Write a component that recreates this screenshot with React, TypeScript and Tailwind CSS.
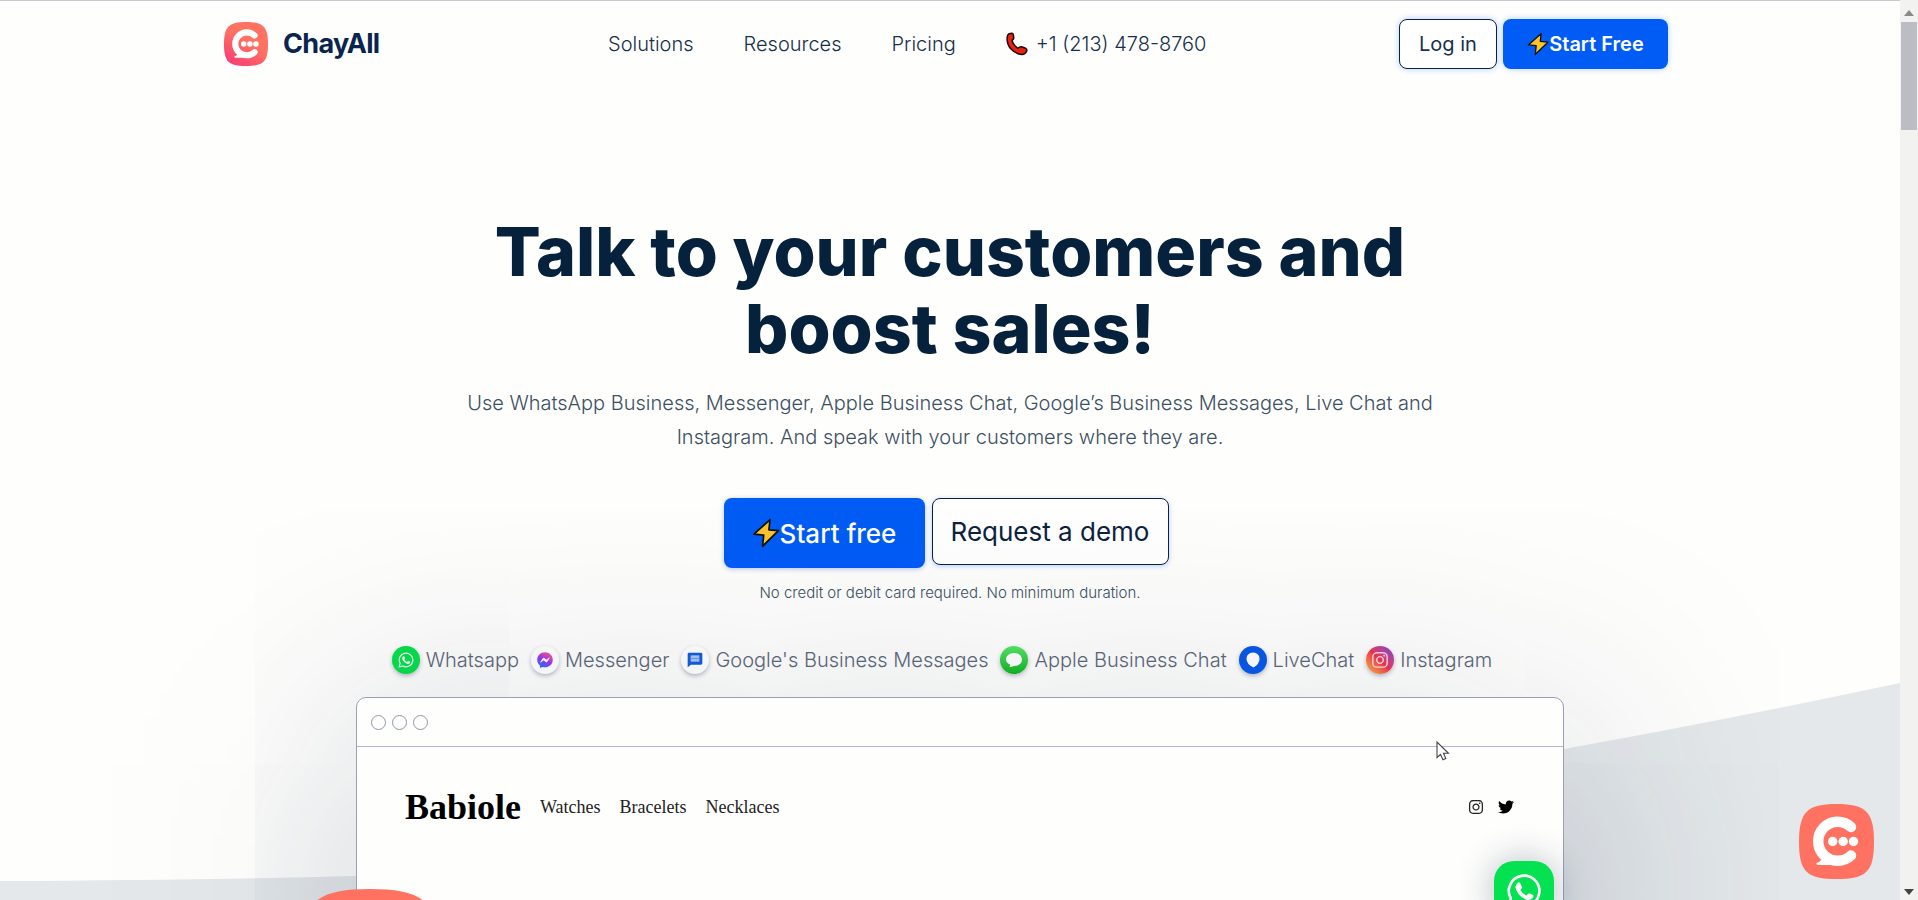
import React from 'react';
import { FaFacebookMessenger, FaInstagram, FaTwitter } from 'react-icons/fa';

const SQUIRCLE = 'M0 38C0 8 8 0 37.5 0S75 8 75 38 67 75 37.5 75 0 68 0 38Z';

const ChayIcon: React.FC<{ className: string; id: string; gradient?: boolean }> = ({ className, id, gradient }) => (
    <svg viewBox="0 0 75 75" className={className} aria-hidden="true">
        <defs>
            <linearGradient id={id} x1="0.7" y1="0.2" x2="0.2" y2="1">
                <stop offset="0.3" stopColor="#ff7262" />
                <stop offset="1" stopColor={gradient ? '#fb3c73' : '#ff7262'} />
            </linearGradient>
        </defs>
        <path d={SQUIRCLE} fill={`url(#${id})`} />
        <path d="M52 23A19.5 19.5 0 1 0 52 51.500" fill="none" stroke="#fff" strokeWidth="10.500" strokeLinecap="round" />
        <path d="M20 50L23 55Q21 58 17.500 59Q17 61 20 61H38V52Z" fill="#fff" />
        <circle cx="33.700" cy="37.500" r="4.700" fill="#fff" />
        <circle cx="44.200" cy="37.500" r="4.700" fill="#fff" />
        <circle cx="54.500" cy="37.500" r="4.700" fill="#fff" />
    </svg>
);

const WhatsappIcon: React.FC<{ className: string }> = ({ className }) => (
    <svg viewBox="0 0 36 36" className={className} aria-hidden="true">
        <path d="M2.500 33.500L4.800 25.500A15.300 15.300 0 1 1 10.800 31.400Z" fill="none" stroke="#fff" strokeWidth="2.600" strokeLinejoin="round" />
        <path
            d="M12.200 9.500Q13.500 9 14.300 10.200L16 14Q16.200 15 14.300 17Q16.500 21 20.500 22.500Q22.500 20 23.300 20.200L27 22Q27.800 22.600 27.200 24.200Q25.500 27.200 22 27Q16.500 26 12.500 21Q9.500 17 9.400 14Q9.800 10.800 12.200 9.500Z"
            fill="#fff"
        />
    </svg>
);

const Bolt: React.FC<{ className: string }> = ({ className }) => (
    <svg viewBox="0 0 24 26" className={className} aria-hidden="true">
        <path d="M15.500 1.500L1.500 14L10 14.800L9 24.500L22.800 11L14.500 10.200Z" fill="#fcc32c" stroke="#111" strokeWidth="1.500" strokeLinejoin="round" />
    </svg>
);

const Phone: React.FC = () => (
    <svg viewBox="0 0 22 24" className="h-6 w-[22px]" aria-hidden="true">
        <path
            d="M3 1.800L6 1.200Q7.200 1.300 7.400 3L7.800 6Q7.700 7.500 6.200 8Q6 11.500 11.800 16.300L13.500 15.200Q15 14.200 16.300 15L20 16.500Q21.200 17.300 20.700 19Q19.500 22.500 15.500 22.500Q9.500 22 4.500 16.500Q0.500 11.500 1.200 5Q1.500 2.500 3 1.800Z"
            fill="#e8220f"
            stroke="#1b0808"
            strokeWidth="1.500"
        />
    </svg>
);

const navLinks = ['Solutions', 'Resources', 'Pricing'];

const Header: React.FC = () => (
    <header className="border-t border-[#c8c8d0]">
        <div className="mx-auto flex h-[86px] max-w-[1452px] items-center justify-between pr-2">
            <a href="#" className="flex items-center gap-[15px]">
                <ChayIcon id="logo-fill" gradient className="h-11 w-11" />
                <span className="text-[27px] font-bold tracking-tight text-[#0a2450]">ChayAll</span>
            </a>
            <nav className="ml-9 flex items-center gap-[50px] text-xl font-light text-[#16304d]">
                {navLinks.map((label) => (
                    <a key={label} href="#">{label}</a>
                ))}
                <a href="#" className="flex items-center gap-2">
                    <Phone />
                    +1 (213) 478-8760
                </a>
            </nav>
            <div className="flex gap-[6px] text-xl">
                <button className="h-[50px] w-[98px] rounded-lg border border-[#0c2340] bg-white text-[#16304d] shadow-[0_0_6px_rgba(0,98,255,0.3)]">Log in</button>
                <button className="flex h-[50px] w-[165px] items-center justify-center rounded-lg bg-[#005cf5] font-semibold text-white shadow-[0_0_6px_rgba(0,98,255,0.3)]">
                    <Bolt className="h-6 w-[22px]" />
                    Start Free
                </button>
            </div>
        </div>
    </header>
);

const BubbleIcon: React.FC = () => (
    <svg viewBox="0 0 28 28" className="h-7 w-7" aria-hidden="true">
        <path d="M14 7C19 7 22 10 22 13.500S19 20 14 20Q11.500 21.200 9 21Q10.500 19.800 10 18.500Q6 16.800 6 13.500C6 10 9 7 14 7Z" fill="#fff" />
    </svg>
);

const PinIcon: React.FC = () => (
    <svg viewBox="0 0 28 28" className="h-7 w-7" aria-hidden="true">
        <path d="M14 6.500Q20.500 7 20.500 13Q20.500 18 14.500 21.500Q7.500 18 7.500 13Q7.500 7 14 6.500Z" fill="#fff" />
    </svg>
);

const GoogleMessagesIcon: React.FC = () => (
    <svg viewBox="0 0 24 24" className="h-4 w-4" aria-hidden="true">
        <path d="M3 1H21Q23 1 23 3V17Q23 19 21 19H6L1 23V3Q1 1 3 1Z" fill="#0f5fdd" />
        <path d="M5.500 5H18.500V14.500H5.500Z" fill="#a9c6f7" />
        <path d="M5.500 9.200H18.500V10.700H5.500Z" fill="#5b93ea" />
    </svg>
);

const MessengerIcon: React.FC = () => (
    <span className="flex">
        <svg className="h-0 w-0" aria-hidden="true">
            <linearGradient id="messenger-fill" x1="0.8" y1="0" x2="0.2" y2="1">
                <stop offset="0" stopColor="#ff5c7c" />
                <stop offset="0.5" stopColor="#a033f5" />
                <stop offset="1" stopColor="#1877ff" />
            </linearGradient>
        </svg>
        <FaFacebookMessenger className="h-4 w-4" fill="url(#messenger-fill)" />
    </span>
);

const channels = [
    { name: 'Whatsapp', bg: 'bg-[#06e04a]', icon: <WhatsappIcon className="h-4 w-4" /> },
    { name: 'Messenger', bg: 'bg-white', icon: <MessengerIcon /> },
    { name: "Google's Business Messages", bg: 'bg-white', icon: <GoogleMessagesIcon /> },
    { name: 'Apple Business Chat', bg: 'bg-linear-to-b from-[#53e663] to-[#06b41f]', icon: <BubbleIcon /> },
    { name: 'LiveChat', bg: 'bg-[#0858e8]', icon: <PinIcon /> },
    { name: 'Instagram', bg: 'bg-linear-to-bl from-[#7a2be0] via-[#f0304f] to-[#fdb52a]', icon: <FaInstagram className="h-[18px] w-[18px] text-[#ffd9e0]" /> },
];

const Hero: React.FC = () => (
    <section className="flex flex-col items-center pt-[126px] text-center">
        <h1 className="max-w-[1000px] text-[68px] leading-[77px] font-extrabold text-[#06213c]">
            Talk to your customers and boost sales!
        </h1>
        <p className="mt-[19px] max-w-[980px] text-xl leading-[34px] font-light text-[#3c5063]">
            Use WhatsApp Business, Messenger, Apple Business Chat, Google’s Business Messages, Live Chat and Instagram. And speak with your customers where they are.
        </p>
        <div className="mt-11 mr-2 flex items-start gap-[7px] text-[26px]">
            <button className="flex h-[70px] w-[201px] items-center justify-center rounded-lg bg-[#005cf5] font-medium text-white shadow-[0_1px_5px_rgba(0,60,200,0.3)]">
                <Bolt className="h-[30px] w-7" />
                Start free
            </button>
            <button className="h-[67px] w-[237px] rounded-lg border border-[#0c2340] bg-white text-[#0c2340] shadow-[0_1px_5px_rgba(0,98,255,0.3)]">Request a demo</button>
        </div>
        <p className="mt-[13px] text-[15px] leading-6 font-light text-[#3c5063]">No credit or debit card required. No minimum duration.</p>
        <ul className="mt-[41px] mr-4 flex gap-3 text-xl text-[#5c6779]">
            {channels.map(({ name, bg, icon }) => (
                <li key={name} className="flex items-center gap-1.5 font-light">
                    <span className={`flex h-7 w-7 items-center justify-center rounded-full shadow-[0_2px_4px_rgba(30,40,70,0.3)] ${bg}`}>{icon}</span>
                    {name}
                </li>
            ))}
        </ul>
    </section>
);

const shopLinks = ['Watches', 'Bracelets', 'Necklaces'];

const BrowserMock: React.FC = () => (
    <div className="pl-5">
        <div className="relative mx-auto mt-[23px] max-w-[1208px]">
            <div className="min-h-[700px] rounded-t-[10px] border border-[#9a9fb5] bg-[#fefefd] shadow-[0_60px_250px_rgba(30,45,85,0.36)]">
                <div className="flex h-[49px] items-center gap-[6px] border-b border-[#b4b6d0] pl-[14px]">
                    <span className="h-[15px] w-[15px] rounded-full border border-[#8f97a8]" />
                    <span className="h-[15px] w-[15px] rounded-full border border-[#8f97a8]" />
                    <span className="h-[15px] w-[15px] rounded-full border border-[#8f97a8]" />
                </div>
                <div className="flex items-center justify-between pt-10 pr-[49px] pl-12">
                    <div className="flex items-center gap-[19px] font-['Liberation_Serif',serif] text-black">
                        <span className="text-4xl font-bold">Babiole</span>
                        {shopLinks.map((label) => (
                            <a key={label} href="#" className="text-lg text-[#222]">{label}</a>
                        ))}
                    </div>
                    <div className="flex items-center gap-[14px]">
                        <a href="#" aria-label="Instagram"><FaInstagram className="h-4 w-4 text-[#222]" /></a>
                        <a href="#" aria-label="Twitter"><FaTwitter className="h-4 w-4 text-black" /></a>
                    </div>
                </div>
            </div>
            <div className="absolute top-[164px] right-[10px] flex h-[60px] w-[60px] items-center justify-center rounded-[20px] bg-[#04e252] shadow-[0_0_36px_rgba(20,30,60,0.3)]">
                <WhatsappIcon className="h-9 w-9" />
            </div>
            <ChayIcon id="bubble-fill" className="absolute top-[192px] -left-[58px] h-36 w-36" />
            <svg viewBox="0 0 14 20" className="absolute top-[44px] right-[114px] h-5 w-[14px]" aria-hidden="true">
                <path d="M1 1V16.500L4.500 13.500L7 18.800L9.800 17.500L7.500 12.300H12.500Z" fill="#fff" stroke="#44444c" strokeWidth="1.100" />
            </svg>
        </div>
    </div>
);

const Backdrop: React.FC = () => (
    <svg viewBox="0 0 1900 900" preserveAspectRatio="none" className="absolute inset-0 h-full w-full" aria-hidden="true">
        <path d="M0 881Q200 880 357 876Q1000 865 1564 749Q1720 721 1900 683V900H0Z" fill="#e4e8ea" />
    </svg>
);

const Scrollbar: React.FC = () => (
    <div className="relative flex w-[18px] shrink-0 flex-col items-center justify-between bg-[#f2f2f0] pt-[10px] pb-[5px]" aria-hidden="true">
        <svg viewBox="0 0 10 6" className="h-[6px] w-[10px]"><path d="M0 6L5 0L10 6Z" fill="#8a8a8a" /></svg>
        <span className="absolute top-[22px] h-[108px] w-4 bg-[#bcbcc4]" />
        <svg viewBox="0 0 10 6" className="h-[6px] w-[10px]"><path d="M0 0L5 6L10 0Z" fill="#444" /></svg>
    </div>
);

const App: React.FC = () => {
    return (
        <div className="flex h-screen overflow-hidden bg-[#fefefc] font-['Inter',sans-serif]">
            <div className="relative flex-1 overflow-hidden">
                <Backdrop />
                <div className="relative">
                    <Header />
                    <main>
                        <Hero />
                        <BrowserMock />
                    </main>
                </div>
                <button aria-label="Open chat" className="absolute right-[26px] bottom-[21px]">
                    <ChayIcon id="widget-fill" className="h-[75px] w-[75px]" />
                </button>
            </div>
            <Scrollbar />
        </div>
    );
};

export default App;
